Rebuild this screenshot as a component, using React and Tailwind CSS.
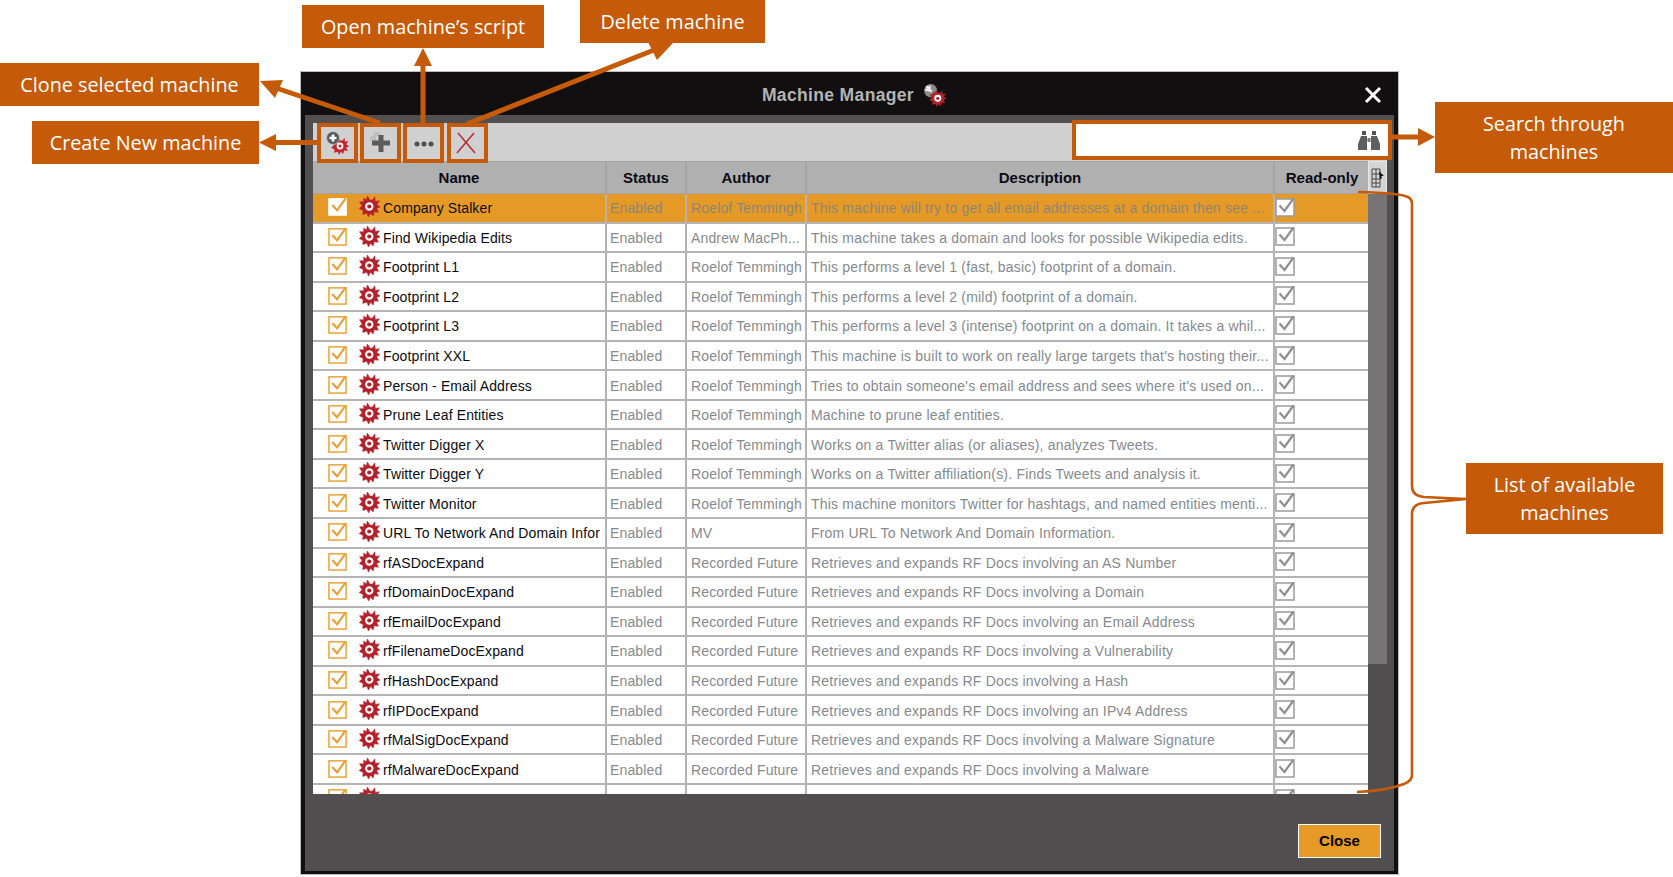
import React from "react";

const ORANGE = "#c55a08";

const rows = [
  ["Company Stalker", "Roelof Temmingh", "This machine will try to get all email addresses at a domain then see ..."],
  ["Find Wikipedia Edits", "Andrew MacPh...", "This machine takes a domain and looks for possible Wikipedia edits."],
  ["Footprint L1", "Roelof Temmingh", "This performs a level 1 (fast, basic) footprint of a domain."],
  ["Footprint L2", "Roelof Temmingh", "This performs a level 2 (mild) footprint of a domain."],
  ["Footprint L3", "Roelof Temmingh", "This performs a level 3 (intense) footprint on a domain. It takes a whil..."],
  ["Footprint XXL", "Roelof Temmingh", "This machine is built to work on really large targets that's hosting their..."],
  ["Person - Email Address", "Roelof Temmingh", "Tries to obtain someone's email address and sees where it's used on..."],
  ["Prune Leaf Entities", "Roelof Temmingh", "Machine to prune leaf entities."],
  ["Twitter Digger X", "Roelof Temmingh", "Works on a Twitter alias (or aliases), analyzes Tweets."],
  ["Twitter Digger Y", "Roelof Temmingh", "Works on a Twitter affiliation(s). Finds Tweets and analysis it."],
  ["Twitter Monitor", "Roelof Temmingh", "This machine monitors Twitter for hashtags, and named entities menti..."],
  ["URL To Network And Domain Infor", "MV", "From URL To Network And Domain Information."],
  ["rfASDocExpand", "Recorded Future", "Retrieves and expands RF Docs involving an AS Number"],
  ["rfDomainDocExpand", "Recorded Future", "Retrieves and expands RF Docs involving a Domain"],
  ["rfEmailDocExpand", "Recorded Future", "Retrieves and expands RF Docs involving an Email Address"],
  ["rfFilenameDocExpand", "Recorded Future", "Retrieves and expands RF Docs involving a Vulnerability"],
  ["rfHashDocExpand", "Recorded Future", "Retrieves and expands RF Docs involving a Hash"],
  ["rfIPDocExpand", "Recorded Future", "Retrieves and expands RF Docs involving an IPv4 Address"],
  ["rfMalSigDocExpand", "Recorded Future", "Retrieves and expands RF Docs involving a Malware Signature"],
  ["rfMalwareDocExpand", "Recorded Future", "Retrieves and expands RF Docs involving a Malware"],
  ["", "", ""],
];

// irregular red splat behind the machine icon
const splat =
  "M8 0 L10.5 4 L13 3.8 L15 0.8 L15.5 5.2 L19.5 4.5 L17 8 L20 10.5 L16.8 11.8 L18.5 15.5 L14.5 15 L13.5 19 L11 16.5 L9 20 L7.5 16.5 L3.5 17.5 L4 13.8 L0.2 12 L3 9.5 L0.5 5.5 L4.5 5.5 L4.5 2 L7 3.8 Z";

function Gear({ className }) {
  return (
    <svg viewBox="0 0 20 20" className={className}>
      <path d={splat} fill="#b5212b" stroke="#b5212b" strokeWidth="0.5" strokeLinejoin="round" />
      <circle cx="9.8" cy="10" r="5.6" fill="#b5212b" />
      <circle cx="9.8" cy="10" r="4" fill="#fff" />
      <circle cx="9.8" cy="10" r="2" fill="#b5212b" />
    </svg>
  );
}

function Check({ className, box, tick, fill = "none" }) {
  return (
    <svg viewBox="0 0 21 21" className={className}>
      <rect x="1" y="3" width="18" height="17" fill={fill} stroke={box} strokeWidth="1.5" />
      <path d="M4.5 9.5 L9.5 15 L18.5 2.5" fill="none" stroke={tick} strokeWidth="2.2" />
    </svg>
  );
}

function ToolButton({ children, className = "" }) {
  return (
    <div className={`relative z-10 h-10 w-[41px] flex items-center justify-center border-[4.5px] border-[#c55a08] bg-[#d0d0d0] ${className}`}>
      {children}
    </div>
  );
}

function Row({ row, selected }) {
  const [name, author, desc] = row;
  const dim = selected ? "text-[#8f8672]" : "text-[#858a90]";
  const cell = "h-full shrink-0 border-r-2 border-[#b4b4b4] overflow-hidden whitespace-nowrap flex items-center";
  return (
    <div className={`h-[29.55px] shrink-0 flex border-b-2 border-[#b4b4b4] ${selected ? "bg-[#e59a27]" : "bg-white"}`}>
      <div className={`${cell} w-[294px] text-[#0b0b14] tracking-[0.12px]`}>
        <Check
          className="ml-[15px] w-[20px] h-[20px] shrink-0 -mt-[3px]"
          box={selected ? "#fff" : "#e89f33"}
          tick="#e89f33"
          fill={selected ? "#fff" : "none"}
        />
        <Gear className="ml-[11px] w-[21px] h-[21px] shrink-0 -mt-[2px]" />
        <span className="ml-[3px] pt-[2px]">{name}</span>
      </div>
      <div className={`${cell} w-[80px] pl-[3px] pt-[2px] tracking-[0.15px] ${dim}`}>{name && "Enabled"}</div>
      <div className={`${cell} w-[120px] pl-[4px] pt-[2px] tracking-[0.15px] ${dim}`}>{author}</div>
      <div className={`${cell} w-[468px] pl-[4px] pt-[2px] tracking-[0.2px] ${dim}`}>{desc}</div>
      <div className="h-full flex-1 flex items-center overflow-hidden">
        <Check className="w-[21px] h-[21px] shrink-0 -mt-[3px]" box="#9a9a9a" tick="#8f8f8f" fill={selected ? "#fff" : "none"} />
      </div>
    </div>
  );
}

function HeadCell({ children, className }) {
  return (
    <div className={`h-full shrink-0 border-r-2 border-[#a4a4a4] flex items-center justify-center pt-[2px] ${className}`}>
      {children}
    </div>
  );
}

function Callout({ children, className }) {
  return (
    <div
      className={`absolute flex items-center justify-center text-center bg-[#c55a08] text-white text-[19.8px] leading-[28px] font-['Open_Sans',sans-serif] ${className}`}
    >
      {children}
    </div>
  );
}

// arrows + bracket drawn over the screenshot
function Annotations() {
  return (
    <svg className="absolute left-0 top-0 z-20 pointer-events-none" width="1673" height="877" viewBox="0 0 1673 877">
      <g fill={ORANGE} stroke="none">
        <rect x="272" y="140" width="46" height="5" />
        <path d="M259 142.5 L276 134 L276 151 Z" />
        <path d="M260 81 L283 80 L275 98 Z" />
        <rect x="420.5" y="62" width="5" height="62" />
        <path d="M423 48 L432 66 L414 66 Z" />
        <path d="M673 43 L648 42 L657 60 Z" />
        <rect x="1390" y="134.5" width="32" height="5" />
        <path d="M1435 137 L1418 128 L1418 146 Z" />
      </g>
      <g fill="none" stroke={ORANGE}>
        <path d="M276 88 L380 123" strokeWidth="5" />
        <path d="M467 124 L654 50" strokeWidth="5" />
        <path d="M1358 192 Q1400 193 1408 197 Q1412 199 1412 204 L1412 486 Q1412 496 1424 497 L1466 499 L1424 503 Q1412 504 1412 514 L1412 775 Q1412 781 1404 784 Q1385 791 1357 792" strokeWidth="2.6" />
      </g>
    </svg>
  );
}

export default function App() {
  return (
    <div className="relative w-[1673px] h-[877px] overflow-hidden bg-white font-['Liberation_Sans',sans-serif] text-[14px]">
      <Callout className="left-0 top-[63px] w-[259px] h-[43px]">Clone selected machine</Callout>
      <Callout className="left-[32px] top-[121px] w-[227px] h-[43px]">Create New machine</Callout>
      <Callout className="left-[302px] top-[5px] w-[242px] h-[43px]">Open machine’s script</Callout>
      <Callout className="left-[580px] top-0 w-[185px] h-[43px]">Delete machine</Callout>
      <Callout className="left-[1435px] top-[102px] w-[238px] h-[71px]">
        Search through
        <br />
        machines
      </Callout>
      <Callout className="left-[1466px] top-[463px] w-[197px] h-[71px]">
        List of available
        <br />
        machines
      </Callout>

      <div className="absolute left-[301px] top-[72px] w-[1097px] h-[802px] flex flex-col bg-[#110f10] outline outline-1 outline-[#bdbdbd]">
        {/* title bar */}
        <div className="h-[43px] shrink-0 flex items-center justify-center relative pl-[10px]">
          <span className="text-[#b4b4b4] font-bold text-[17.5px] tracking-[0.35px] mt-[3px]">Machine Manager</span>
          <svg viewBox="0 0 22 22" className="w-[24px] h-[24px] ml-[9px] mt-[2px]">
            <circle cx="7" cy="7" r="6" fill="#8d8d8d" />
            <path d="M3 3 L8 8 M6 2.5 L6 7 L2 6" stroke="#eee" strokeWidth="2" fill="none" />
            <path d={splat} transform="translate(5.5 6) scale(0.8)" fill="#b5212b" />
            <circle cx="13.5" cy="14" r="3.2" fill="#fff" />
            <circle cx="13.5" cy="14" r="1.5" fill="#b5212b" />
          </svg>
          <svg viewBox="0 0 18 18" className="absolute right-[16px] top-[14px] w-[18px] h-[18px]">
            <path d="M2 2 L16 16 M16 2 L2 16" stroke="#fff" strokeWidth="3" />
          </svg>
        </div>

        {/* inner panel */}
        <div className="flex-1 mx-[4px] mb-[3px] bg-[#524f50] pt-[8px] pl-[8px] pr-[7px] flex flex-col min-h-0">
          {/* toolbar */}
          <div className="h-[38px] shrink-0 bg-[#d0d0d0] flex items-start pl-[4px] gap-[2px]">
            <ToolButton>
              <svg viewBox="0 0 24 24" className="w-[24px] h-[24px] -ml-[2px]">
                <path d={splat} transform="translate(6 6) scale(0.9)" fill="#c4222c" />
                <circle cx="15" cy="15" r="3.4" fill="#fff" />
                <circle cx="15" cy="15" r="1.6" fill="#c4222c" />
                <circle cx="8" cy="7" r="6.5" fill="#5a5a5a" stroke="#d0d0d0" strokeWidth="0.8" />
                <path d="M4.5 7 H11.5 M8 3.5 V10.5" stroke="#fff" strokeWidth="2.6" />
              </svg>
            </ToolButton>
            <ToolButton>
              <svg viewBox="0 0 24 24" className="w-[24px] h-[24px]">
                <path d="M5 1 H11 V5 H5 Z M1 5 H7 V10 H1 Z" fill="#bdbdbd" />
                <path d="M9.5 4 H14.5 V9.5 H21 V14.5 H14.5 V21 H9.5 V14.5 H3 V9.5 H9.5 Z" fill="#5c5c5c" />
              </svg>
            </ToolButton>
            <ToolButton>
              <svg viewBox="0 0 24 24" className="w-[24px] h-[24px]">
                <circle cx="5" cy="13" r="2.5" fill="#4f4f4f" />
                <circle cx="12" cy="13" r="2.5" fill="#4f4f4f" />
                <circle cx="19" cy="13" r="2.5" fill="#4f4f4f" />
              </svg>
            </ToolButton>
            <ToolButton className="ml-[1px]">
              <svg viewBox="0 0 24 24" className="w-[24px] h-[24px] -ml-[3px]">
                <path d="M4 2 L21 22 M20 2 L3 22" stroke="#b5303a" strokeWidth="1.6" />
              </svg>
            </ToolButton>
            <div className="relative z-10 ml-auto -mt-[3px] -mr-[5px] w-[320px] h-[40px] border-[4.5px] border-[#c55a08] bg-white flex items-center justify-end pr-[8px]">
              <svg viewBox="0 0 22 20" className="w-[22px] h-[20px]">
                <path d="M4 1 H8 V5 H4 Z M14 1 H18 V5 H14 Z" fill="#555" />
                <path d="M3 6 H9 V20 H0 V14 Z M13 6 H19 L22 14 V20 H13 Z" fill="#5f5f5f" />
                <rect x="9.5" y="8" width="3" height="4" fill="#777" />
              </svg>
            </div>
          </div>

          <div className="flex-1 min-h-0 flex">
            {/* table */}
            <div className="w-[1055px] shrink-0 flex flex-col">
              <div className="h-[33px] shrink-0 flex bg-[#b0b0b0] text-[#0b0b14] font-bold text-[15px] border-y border-[#a4a4a4]">
                <HeadCell className="w-[294px]">Name</HeadCell>
                <HeadCell className="w-[80px]">Status</HeadCell>
                <HeadCell className="w-[120px]">Author</HeadCell>
                <HeadCell className="w-[468px]">Description</HeadCell>
                <div className="flex-1 flex items-center justify-center pt-[2px] pl-[1px] whitespace-nowrap">Read-only</div>
              </div>
              <div className="h-[600px] shrink-0 overflow-hidden flex flex-col">
                {rows.map((r, i) => (
                  <Row key={i} row={r} selected={i === 0} />
                ))}
              </div>
            </div>

            {/* scrollbar */}
            <div className="w-[19px] shrink-0 flex flex-col">
              <div className="h-[33px] shrink-0 bg-[#d4d4d4] border border-[#e8e8e8] flex items-center justify-center">
                <svg viewBox="0 0 14 20" className="w-[14px] h-[20px]">
                  <path d="M1 1 H9 V19 H1 Z M1 6 H9 M1 11 H9 M1 15 H9 M5 1 V19" fill="none" stroke="#444" strokeWidth="1" />
                  <path d="M8 3 L13 8 L10.5 8 L10.5 11 L9 11 Z" fill="#111" />
                </svg>
              </div>
              <div className="h-[470px] bg-[#777475] shrink-0" />
            </div>
          </div>

          <div className="absolute right-[17px] bottom-[16px] w-[83px] h-[34px] border border-white bg-[#e59a27] text-black font-bold text-[15px] flex items-center justify-center">
            Close
          </div>
        </div>
      </div>

      <Annotations />
    </div>
  );
}
